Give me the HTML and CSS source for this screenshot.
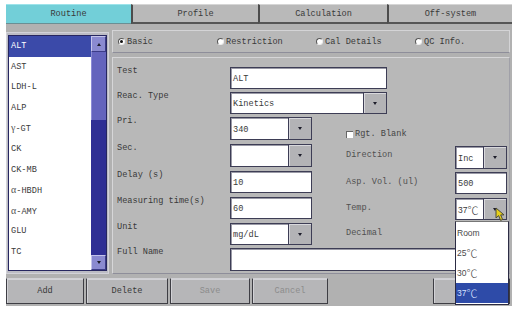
FILE: index.html
```html
<!DOCTYPE html>
<html lang="en">
<head>
    <meta charset="UTF-8">
    <meta name="viewport" content="width=device-width, initial-scale=1.0">
    <title>Routine - Test Parameters</title>
    <link rel="stylesheet" href="styles.css">
</head>
<body>
    <div class="screen">
        <div class="tabs">
            <div class="tab active">Routine</div>
            <div class="tab">Profile</div>
            <div class="tab">Calculation</div>
            <div class="tab">Off-system</div>
        </div>

        <div class="main">
            <div class="list-panel">
                <div class="list-box">
                    <ul class="test-list">
                        <li class="selected">ALT</li>
                        <li>AST</li>
                        <li>LDH-L</li>
                        <li>ALP</li>
                        <li><span class="greek">γ</span>-GT</li>
                        <li>CK</li>
                        <li>CK-MB</li>
                        <li><span class="greek">α</span>-HBDH</li>
                        <li><span class="greek">α</span>-AMY</li>
                        <li>GLU</li>
                        <li>TC</li>
                    </ul>
                    <div class="scrollbar">
                        <div class="scroll-btn"><span class="tri up"></span></div>
                        <div class="thumb"></div>
                        <div class="track"></div>
                        <div class="scroll-btn down"><span class="tri"></span></div>
                    </div>
                </div>
            </div>

            <div class="right">
                <div class="radio-bar">
                    <label class="radio"><span class="dot checked"></span>Basic</label>
                    <label class="radio"><span class="dot"></span>Restriction</label>
                    <label class="radio"><span class="dot"></span>Cal Details</label>
                    <label class="radio"><span class="dot"></span>QC Info.</label>
                </div>

                <div class="form">
                    <div class="lbl r1">Test</div>
                    <div class="field wide r1"><span class="value">ALT</span></div>

                    <div class="lbl r2">Reac. Type</div>
                    <div class="field wide r2"><span class="value">Kinetics</span><span class="drop"><span class="tri"></span></span></div>

                    <div class="lbl r3">Pri.</div>
                    <div class="field r3"><span class="value">340</span><span class="drop"><span class="tri"></span></span></div>
                    <div class="check-row r3"><span class="check"></span>Rgt. Blank</div>

                    <div class="lbl r4">Sec.</div>
                    <div class="field r4"><span class="value"></span><span class="drop"><span class="tri"></span></span></div>
                    <div class="rlbl r4">Direction</div>
                    <div class="field small r4"><span class="value">Inc</span><span class="drop"><span class="tri"></span></span></div>

                    <div class="lbl r5">Delay (s)</div>
                    <div class="field r5"><span class="value">10</span></div>
                    <div class="rlbl r5">Asp. Vol. (ul)</div>
                    <div class="field small r5"><span class="value">500</span></div>

                    <div class="lbl r6">Measuring time(s)</div>
                    <div class="field r6"><span class="value">60</span></div>
                    <div class="rlbl r6">Temp.</div>
                    <div class="field small open r6">
                        <span class="value temp">37<span class="deg">℃</span></span><span class="drop"><span class="tri"></span></span>
                        <ul class="options">
                            <li>Room</li>
                            <li>25<span class="deg">℃</span></li>
                            <li>30<span class="deg">℃</span></li>
                            <li class="selected">37<span class="deg">℃</span></li>
                        </ul>
                        <svg class="cursor" width="11" height="15" viewBox="0 0 11 15">
                            <path d="M1 1 L1 11 L3.6 8.6 L5.6 13.4 L7.6 12.5 L5.7 7.9 L9 7.9 Z" fill="#e6cf1c" stroke="#4a4a3a" stroke-width="1"/>
                        </svg>
                    </div>

                    <div class="lbl r7">Unit</div>
                    <div class="field r7"><span class="value">mg/dL</span><span class="drop"><span class="tri"></span></span></div>
                    <div class="rlbl r7">Decimal</div>

                    <div class="lbl r8">Full Name</div>
                    <div class="field full r8"><span class="value"></span></div>
                </div>
            </div>
        </div>

        <div class="buttons">
            <button class="btn add">Add</button>
            <button class="btn del">Delete</button>
            <button class="btn save" disabled>Save</button>
            <button class="btn cancel" disabled>Cancel</button>
            <button class="btn last"></button>
        </div>
    </div>
</body>
</html>
```

FILE: styles.css
```css
body {
    margin: 0;
    background: #fff;
    font-family: "Liberation Mono", "DejaVu Sans Mono", "Noto Sans CJK SC", monospace;
    font-size: 8.6px;
    color: #383838;
}
.screen {
    width: 506px;
    height: 302px;
    margin: 4px 0 0 6px;
    background: #b1b1b1;
}

/* top tabs */
.tabs {
    display: grid;
    grid-template-columns: 125px 127px 129px 125px;
    height: 20px;
}
.tab {
    display: flex;
    align-items: center;
    justify-content: center;
    background: #b9b9b9;
    border-left: 2px solid #4c4c4c;
    border-bottom: 2px solid #555;
    border-top: 1px solid #d6d6d6;
    color: #3a3a3a;
}
.tab.active {
    background: #72cfd8;
    border-left: none;
    border-bottom: 1px solid #6a8f94;
    border-top-color: #9de3ea;
}

.main {
    display: flex;
    gap: 3px;
    height: 244px;
    margin-top: 6px;
}

/* test list */
.list-panel {
    width: 103px;
    height: 242px;
    margin-top: 2px;
    box-sizing: border-box;
    border: 1px solid #d2d2d8;
    padding: 2px 1px;
    background: #bcbcc4;
}
.list-box {
    display: flex;
    height: 100%;
    box-sizing: border-box;
    border: 1px solid #262660;
    background: #fff;
}
.test-list {
    list-style: none;
    margin: 0;
    padding: 0;
    width: 82px;
}
.test-list li {
    height: 20.6px;
    line-height: 20.6px;
    padding-left: 2px;
    color: #3a3a3a;
}
.test-list li.selected {
    background: #3b4aa9;
    color: #fff;
}
.greek {
    font-family: "Liberation Serif", serif;
    font-size: 10px;
    color: #555;
}
.scrollbar {
    display: flex;
    flex-direction: column;
    width: 15px;
    background: #2f2f94;
}
.scroll-btn {
    height: 16px;
    display: flex;
    align-items: center;
    justify-content: center;
    background: #8a8ad0;
    border: 1px solid #c4c4ea;
    border-right-color: #3c3c88;
    border-bottom-color: #3c3c88;
    box-sizing: border-box;
}
.scroll-btn.down {
    height: 15px;
}
.thumb {
    height: 68px;
    background: #6464bd;
    border-left: 1px solid #8c8cd6;
}
.track {
    flex: 1;
}
.tri {
    width: 0;
    height: 0;
    border-left: 2.5px solid transparent;
    border-right: 2.5px solid transparent;
    border-top: 3px solid #1c1c2a;
}
.tri.up {
    border-top: none;
    border-bottom: 3px solid #1c1c2a;
}

/* right side */
.right {
    width: 398px;
    display: flex;
    flex-direction: column;
    gap: 4px;
}
.radio-bar {
    height: 23px;
    box-sizing: border-box;
    display: grid;
    grid-template-columns: repeat(4, 99px);
    align-items: center;
    padding-left: 5px;
    background: #b8b8b8;
    border: 1px solid #d4d4d6;
    border-bottom-color: #8e8e9a;
}
.radio {
    display: flex;
    align-items: center;
    gap: 2px;
    color: #383838;
}
.dot {
    width: 7px;
    height: 7px;
    box-sizing: border-box;
    border-radius: 50%;
    background: #fff;
    border: 1px solid #eee;
    border-top-color: #555;
    border-left-color: #555;
    position: relative;
}
.dot.checked::after {
    content: "";
    position: absolute;
    left: 1px;
    top: 1px;
    width: 3px;
    height: 3px;
    border-radius: 50%;
    background: #111;
}

.form {
    height: 217px;
    box-sizing: border-box;
    padding: 9px 0 2px 4px;
    background: #b8b8b8;
    border: 1px solid #d6d6d8;
    border-right-color: #a0a0a8;
    border-bottom-color: #8e8e9a;
    display: grid;
    grid-template-columns: 113px 82px 34px 109px 52px;
    grid-template-rows: 25px 25px 27px 27px 26px 26px 25px 23px;
}
.r1 { grid-row: 1; }
.r2 { grid-row: 2; }
.r3 { grid-row: 3; }
.r4 { grid-row: 4; }
.r5 { grid-row: 5; }
.r6 { grid-row: 6; }
.r7 { grid-row: 7; }
.r8 { grid-row: 8; }

.lbl {
    grid-column: 1;
    line-height: 9px;
    align-self: start;
    color: #383838;
}
.rlbl {
    grid-column: 4;
    align-self: center;
    line-height: 9px;
    margin-bottom: 4px;
    color: #505050;
}
.check-row {
    grid-column: 4;
    align-self: end;
    margin-bottom: 5px;
    display: flex;
    align-items: center;
    gap: 2px;
    line-height: 9px;
    color: #454545;
}
.check {
    width: 7px;
    height: 7px;
    box-sizing: border-box;
    background: #fff;
    border-top: 1px solid #666;
    border-left: 1px solid #666;
}

.field {
    grid-column: 2;
    align-self: start;
    height: 22px;
    box-sizing: border-box;
    display: flex;
    background: #fff;
    border: 1px solid #3d3d55;
    box-shadow: inset 1px 1px 0 #9a9aa6;
    color: #3a3a3a;
}
.field.r3, .field.r4, .field.r8 {
    height: 23px;
}
.field .value {
    flex: 1;
    display: flex;
    align-items: center;
    padding: 2px 0 0 2px;
}
.field.wide {
    grid-column: 2 / span 3;
    width: 157px;
}
.field.small {
    grid-column: 5;
    margin-top: 1px;
}
.field.small.r4 {
    margin-top: 2px;
}
.field.full {
    grid-column: 2 / -1;
}
.drop {
    width: 22px;
    display: flex;
    align-items: center;
    justify-content: center;
    background: #b3b3b6;
    border-left: 1px solid #3d3d55;
    box-shadow: inset 1px 1px 0 #d8d8dc;
}

/* open temperature dropdown */
.field.open {
    position: relative;
    z-index: 2;
}
.temp, .options li {
    font-family: "Liberation Sans", Arial, sans-serif;
    font-size: 8.5px;
}
.deg {
    font-family: "Noto Sans CJK SC", sans-serif;
    font-size: 11px;
    font-weight: 300;
    line-height: 1;
}
.options {
    position: absolute;
    left: -1px;
    top: 22px;
    width: 54px;
    height: 84px;
    box-sizing: border-box;
    margin: 0;
    padding: 1px 0 0;
    list-style: none;
    background: #fff;
    border: 1px solid #2c2c44;
    border-top-color: #777;
}
.options li {
    height: 20px;
    display: flex;
    align-items: center;
    padding-left: 1px;
    color: #4a4a4a;
}
.options li.selected {
    background: #2e4ba8;
    color: #d8e0ff;
}
.cursor {
    position: absolute;
    left: 39px;
    top: 8px;
}

/* bottom buttons */
.buttons {
    display: flex;
    gap: 2px;
    height: 26px;
    margin-top: 4px;
    padding-right: 2px;
}
.btn {
    font-family: inherit;
    font-size: 8.6px;
    color: #383838;
    background: #b6b6b8;
    border: 1px solid #3e3e44;
    border-top-color: #d0d0d4;
    box-shadow: inset 1px 1px 0 #d2d2d6;
    padding: 0;
}
.btn:disabled {
    color: #8c8c8c;
}
.add { width: 78px; }
.del { width: 82px; }
.save { width: 80px; }
.cancel { width: 76px; }
.last {
    width: 77px;
    margin-left: auto;
}
```
